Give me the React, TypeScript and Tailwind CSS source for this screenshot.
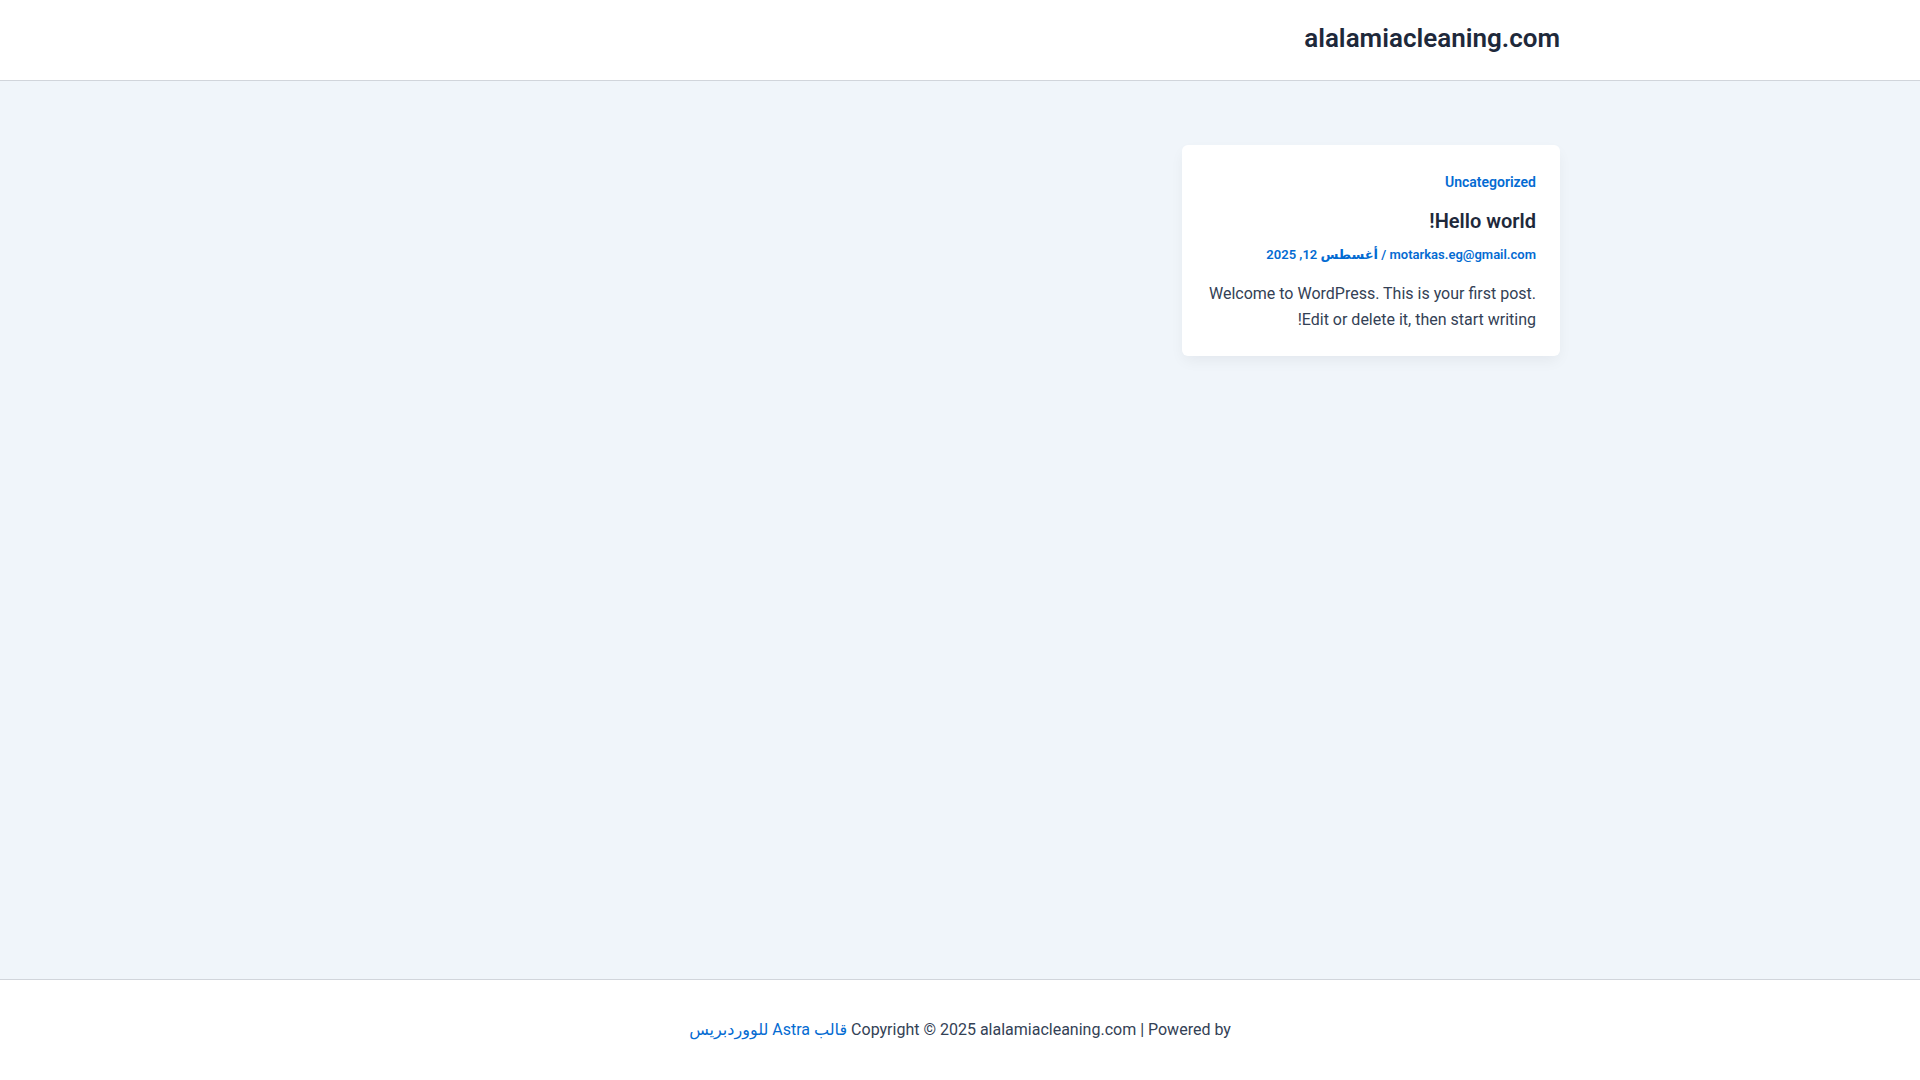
import React from "react";

export default function App() {
  return (
    <div
      dir="rtl"
      className="flex min-h-screen flex-col bg-[#f0f5fa]"
      style={{ fontFamily: "Roboto, 'DejaVu Sans', sans-serif" }}
    >
      <header className="h-[81px] border-b border-[#d1d5db] bg-white">
        <div className="mx-auto flex h-full w-[1200px] items-center pb-[5px]">
          <a className="text-[26px] font-semibold leading-none text-[#1e293b]" href="#">
            alalamiacleaning.com
          </a>
        </div>
      </header>

      <main className="flex-1">
        <div className="mx-auto w-[1200px] pt-[64px]">
          <article className="w-[378px] rounded-[6px] bg-white px-6 pb-[23px] pt-6 shadow-[0_6px_15px_-2px_rgba(16,24,40,0.06)]">
            <div className="text-[14px] font-semibold leading-[26px] text-[#046bd2]">
              Uncategorized
            </div>
            <h2 className="mt-[11px] text-[20px] font-semibold leading-[30px] text-[#1e293b]">
              Hello world!
            </h2>
            <div className="mt-[9px] text-[13px] font-semibold leading-[20px] text-[#046bd2]">
              <span>motarkas.eg@gmail.com</span> / <span>أغسطس 12, 2025</span>
            </div>
            <p className="mt-[16px] text-[16px] leading-[26px] text-[#334155]">
              Welcome to WordPress. This is your first post. Edit or delete it, then start writing!
            </p>
          </article>
        </div>
      </main>

      <footer className="h-[101px] border-t border-[#d1d5db] bg-white">
        <div className="flex h-full items-center justify-center">
          <div className="text-[16px] leading-[26px] text-[#334155]">
            Copyright © 2025 alalamiacleaning.com | Powered by{" "}
            <a className="text-[#046bd2]" href="#">
              قالب Astra للووردبريس
            </a>
          </div>
        </div>
      </footer>
    </div>
  );
}
